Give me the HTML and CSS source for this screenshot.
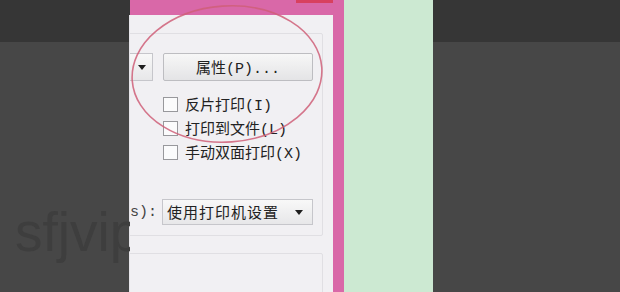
FILE: index.html
```html
<!DOCTYPE html>
<html lang="zh-CN">
<head>
<meta charset="utf-8">
<title>打印</title>
<link rel="stylesheet" href="styles.css">
</head>
<body>
<div class="screen">
  <div class="side-left">
    <div class="watermark">sfjvip</div>
  </div>
  <div class="dialog">
    <div class="titlebar"><span class="close"></span></div>
    <div class="frame">
      <div class="client">
        <div class="group g1">
          <div class="row1">
            <div class="select printer"><span class="arrow"></span></div>
            <button class="btn">属性(P)...</button>
          </div>
          <div class="checks">
            <div class="check"><span class="box"></span><span>反片打印(I)</span></div>
            <div class="check"><span class="box"></span><span>打印到文件(L)</span></div>
            <div class="check"><span class="box"></span><span>手动双面打印(X)</span></div>
          </div>
          <div class="row2">
            <div class="lbl"><span>s):</span></div>
            <div class="select source"><span class="sel-text">使用打印机设置</span><span class="arrow"></span></div>
          </div>
        </div>
        <div class="group g2"></div>
      </div>
    </div>
  </div>
  <div class="green"></div>
  <div class="side-right"></div>
  <svg class="annot" width="620" height="292" viewBox="0 0 620 292">
    <ellipse cx="227" cy="74" rx="95" ry="68" transform="rotate(-4 227 74)" fill="none" stroke="#cf5f78" stroke-opacity="0.85" stroke-width="1.6"/>
  </svg>
</div>
</body>
</html>
```

FILE: styles.css
```css
html, body {
  margin: 0;
  padding: 0;
}
body {
  background: linear-gradient(#363636 0, #363636 42px, #474747 42px, #474747 100%);
  font-family: "Liberation Mono", "Noto Sans CJK SC", monospace;
  color: #222222;
}
.screen {
  display: flex;
  width: 620px;
  height: 292px;
  overflow: hidden;
  position: relative;
}
.side-left {
  width: 130px;
  flex: none;
  overflow: hidden;
}
.watermark {
  margin-top: 205px;
  padding-left: 15px;
  font: 55px/55px "Liberation Sans", sans-serif;
  color: #3e3e3e;
  white-space: nowrap;
  filter: blur(0.7px);
}
.dialog {
  width: 214px;
  flex: none;
  display: flex;
  flex-direction: column;
  background: #d968a8;
}
.titlebar {
  height: 15px;
  flex: none;
  display: flex;
  justify-content: flex-end;
  padding-right: 11px;
}
.close {
  width: 37px;
  height: 3px;
  background: #d8405f;
}
.frame {
  flex: 1;
  display: flex;
  padding-right: 11px;
  min-height: 0;
}
.client {
  flex: 1;
  background: #f1f0f3;
  overflow: hidden;
  border-left: 1px solid #e6e5ea;
  margin-left: -1px;
}
.group {
  border: 1px solid #e0dfe3;
  border-radius: 2px;
  margin-left: -20px;
  margin-right: 10px;
  box-sizing: border-box;
}
.g1 {
  margin-top: 18px;
  height: 203px;
  padding-top: 19px;
}
.g2 {
  margin-top: 17px;
  height: 100px;
}
.row1 {
  display: flex;
  gap: 10px;
  height: 28px;
}
.select {
  box-sizing: border-box;
  border: 1px solid #c6c6cb;
  background: linear-gradient(#f8f8f8, #e7e7e9);
  display: flex;
  align-items: center;
}
.printer {
  width: 42px;
  justify-content: flex-end;
  padding-right: 6px;
}
.arrow {
  width: 0;
  height: 0;
  border-left: 4px solid transparent;
  border-right: 4px solid transparent;
  border-top: 5px solid #1e1e1e;
}
.btn {
  width: 150px;
  height: 28px;
  padding: 0;
  border: 1px solid #bdbdc1;
  border-radius: 2px;
  background: linear-gradient(#f7f7f7, #e4e4e6);
  font: 15px "Liberation Mono", "Noto Sans CJK SC", monospace;
  color: #222222;
}
.checks {
  margin-top: 11px;
  margin-left: 52px;
}
.check {
  display: flex;
  align-items: center;
  gap: 7px;
  height: 24px;
  font-size: 15px;
  white-space: nowrap;
}
.box {
  width: 15px;
  height: 15px;
  box-sizing: border-box;
  border: 1px solid #98989c;
  background: #fbfbfc;
  flex: none;
}
.row2 {
  display: flex;
  align-items: center;
  gap: 5px;
  height: 26px;
  margin-top: 35px;
  margin-left: 19px;
}
.lbl {
  width: 27px;
  flex: none;
  display: flex;
  justify-content: flex-end;
  white-space: nowrap;
  font-size: 15px;
  color: #444444;
}
.source {
  width: 151px;
  height: 26px;
  padding-left: 4px;
  padding-right: 9px;
  justify-content: space-between;
}
.sel-text {
  font-size: 15px;
  letter-spacing: 1px;
  white-space: nowrap;
}
.green {
  width: 89px;
  flex: none;
  background: #cce9d2;
}
.side-right {
  flex: 1;
}
.annot {
  position: absolute;
  left: 0;
  top: 0;
  pointer-events: none;
}
```
